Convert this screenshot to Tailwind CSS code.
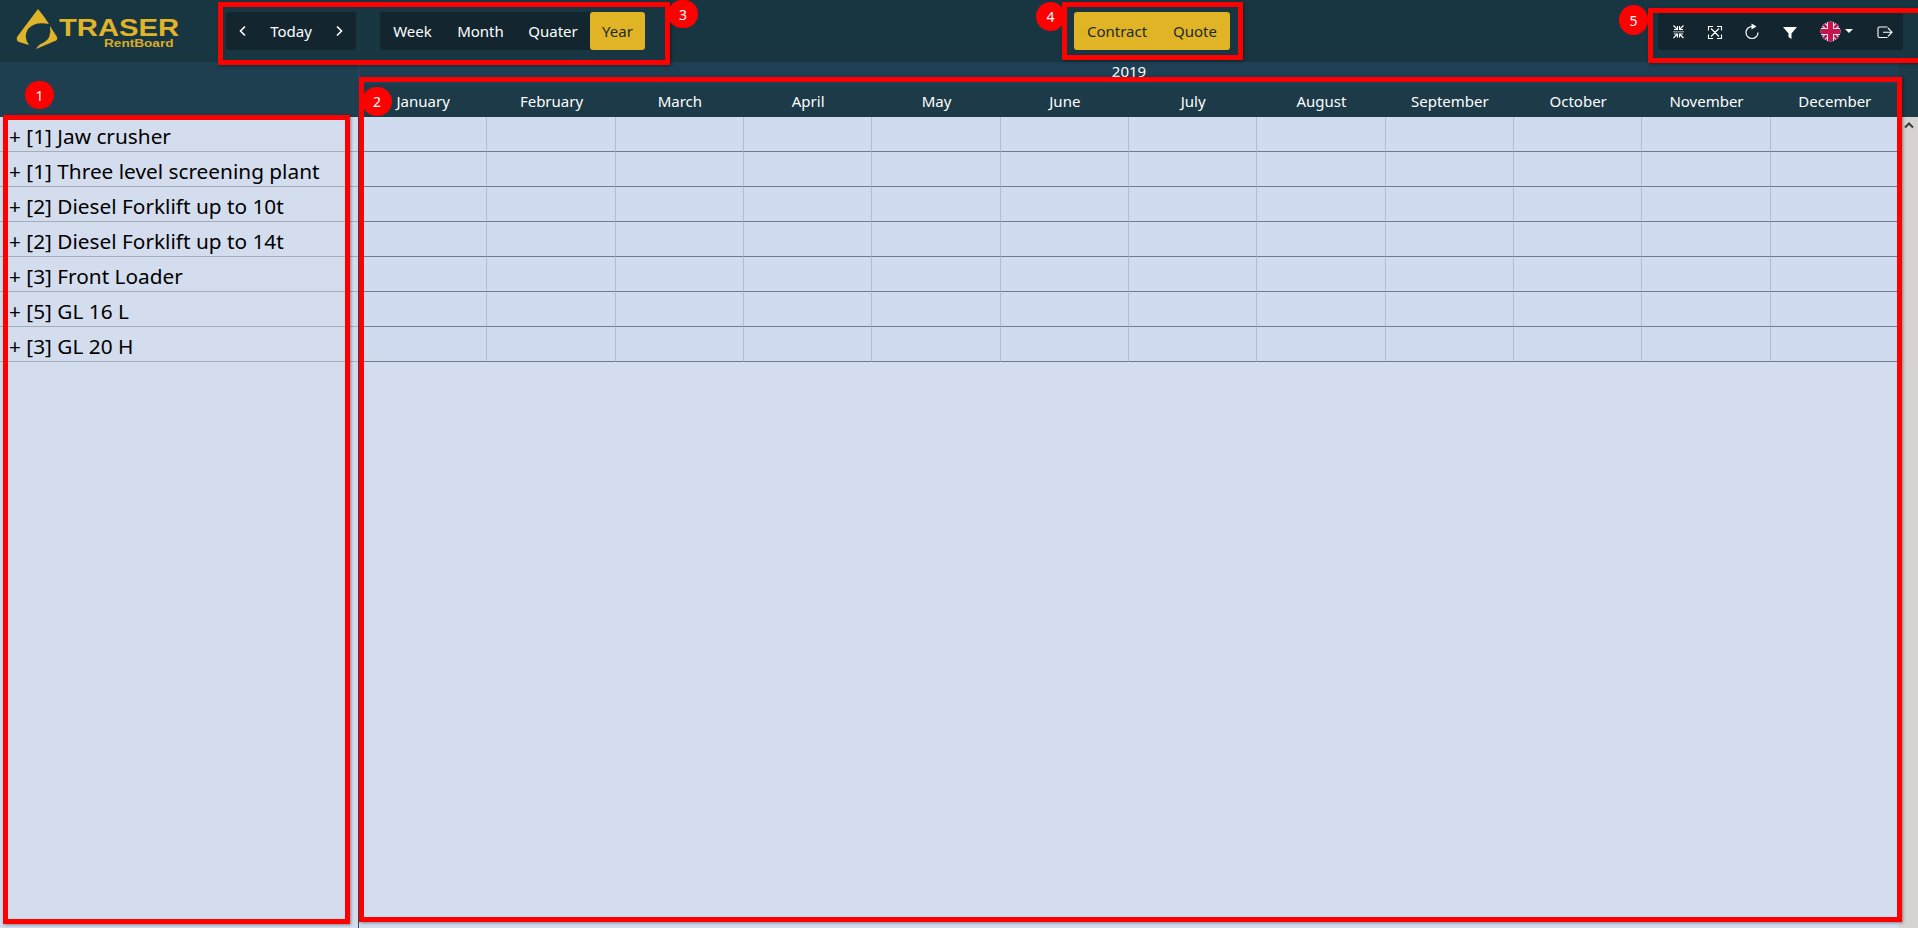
<!DOCTYPE html>
<html lang="en">
<head>
  <meta charset="UTF-8">
  <title>Traser RentBoard</title>
  <script src="https://cdn.jsdelivr.net/npm/@tailwindcss/browser@4"></script>
</head>
<body class="relative h-screen overflow-hidden bg-[#d4ddef] font-['Noto_Sans',sans-serif]">

  <!-- Top bar -->
  <header class="h-[62px] flex items-center bg-[#183642] text-white text-[15px]">
    <!-- Logo -->
    <div class="relative w-[226px] h-full pl-[16px] pt-[9px]">
      <svg class="w-[42px] h-[41px]" viewBox="0 0 42 41" fill="#e0b428">
        <path d="M22 0 L1 28 Q0 32 3 33 L13 36 Q7 28 12 20 Q19 12 33 15 Q28 7 22 0Z"/>
        <path d="M34 17 L41 28 Q42 31 39 32 L20 40 Q23 35 27 34 Q36 30 34 17Z"/>
      </svg>
      <span class="absolute left-[59px] top-[16px] origin-left scale-x-[1.27] text-[23px] leading-[24px] font-bold text-[#e0b428] font-['Liberation_Sans',sans-serif]">TRASER</span>
      <span class="absolute left-[104px] top-[38px] origin-left scale-x-[1.36] text-[10px] leading-[11px] font-bold text-[#d9ad26] font-['Liberation_Sans',sans-serif]">RentBoard</span>
    </div>

    <!-- Navigation -->
    <div class="flex items-center h-[38px] w-[130px] bg-[#13262f] rounded-[3px]">
      <button class="w-[34px] h-full flex items-center justify-center">
        <svg class="w-[10px] h-[12px]" viewBox="0 0 10 12" fill="none" stroke="white" stroke-width="1.6"><path d="M7 1.5 L2.5 6 L7 10.5"/></svg>
      </button>
      <button class="flex-1 h-full">Today</button>
      <button class="w-[34px] h-full flex items-center justify-center">
        <svg class="w-[10px] h-[12px]" viewBox="0 0 10 12" fill="none" stroke="white" stroke-width="1.6"><path d="M3 1.5 L7.5 6 L3 10.5"/></svg>
      </button>
    </div>
    <div class="ml-[24px] flex items-center h-[38px] w-[265px] bg-[#13262f] rounded-[3px]">
      <button class="w-[65px] h-full">Week</button>
      <button class="w-[71px] h-full">Month</button>
      <button class="w-[74px] h-full">Quater</button>
      <button class="w-[55px] h-full bg-[#e0b424] text-[#1b2a2c] rounded-[3px]">Year</button>
    </div>

    <!-- Document type -->
    <div class="ml-[429px] flex items-center h-[38px] w-[156px] bg-[#e0b424] text-[#1b2a2c] rounded-[3px]">
      <button class="w-[86px] h-full">Contract</button>
      <button class="w-[70px] h-full">Quote</button>
    </div>

    <!-- Tools -->
    <div class="ml-auto mr-[15px] h-[38px] w-[245px] bg-[#13262f] rounded-[3px]">
      <svg class="w-[245px] h-[38px]" viewBox="0 0 245 38" fill="none" stroke="white" stroke-width="1.1">
        <!-- collapse -->
        <path d="M15.5 13.5 L19.5 17.5 M19.5 14 V17.5 H16 M25.5 13.5 L21.5 17.5 M21.5 14 V17.5 H25 M15.5 26 L19.5 22 M19.5 25.5 V22 H16 M25.5 26 L21.5 22 M21.5 25.5 V22 H25"/>
        <path d="M15 19.8 H26" stroke-opacity="0.6"/>
        <!-- expand -->
        <path d="M53 16.5 L61 24.5 M61 16.5 L53 24.5 M50.5 18.5 V14.5 H55 M59 14.5 H63.5 V18.5 M50.5 22.5 V26.5 H55 M59 26.5 H63.5 V22.5"/>
        <!-- refresh -->
        <path d="M94 14.5 A6 6 0 1 0 100 20.5" stroke-width="1.2"/>
        <path d="M93.5 11.5 L98.5 14.5 L93.5 17.5Z" fill="white" stroke="none"/>
        <!-- filter -->
        <path d="M125 15 H139 L133.5 21.5 V27 L130.5 25 V21.5Z" fill="white" stroke="none"/>
        <!-- flag -->
        <clipPath id="flag"><circle cx="172.5" cy="19.5" r="10"/></clipPath>
        <g clip-path="url(#flag)" stroke="none">
          <rect x="162" y="9" width="21" height="21" fill="#4a4590"/>
          <path d="M162 9 L183 30 M183 9 L162 30" stroke="#e6dcee" stroke-width="4.5"/>
          <path d="M162 9 L183 30 M183 9 L162 30" stroke="#c4164a" stroke-width="2.5"/>
          <path d="M169 9 H176 V16 H183 V23 H176 V30 H169 V23 H162 V16 H169Z" fill="#efe8f2"/>
          <path d="M170 9 H175 V17 H183 V22 H175 V30 H170 V22 H162 V17 H170Z" fill="#c4164a"/>
        </g>
        <path d="M187 17 H195 L191 21Z" fill="white" stroke="none"/>
        <!-- sign out -->
        <path d="M229.5 15 H221.5 Q220 15 220 16.5 V24 Q220 25.5 221.5 25.5 H229.5"/>
        <path d="M225 20.2 H234 M230 16 L234 20.2 L230 24.4"/>
      </svg>
    </div>
  </header>

  <!-- Board -->
  <div class="flex h-[866px]">
    <!-- Resources -->
    <aside class="w-[358px] shrink-0 flex flex-col">
      <div class="h-[55px] bg-[#1d3f50]"></div>
      <div id="resources" class="flex-1 bg-[#d3ddee]"></div>
    </aside>

    <!-- Timeline -->
    <main class="w-[1541px] shrink-0 flex flex-col border-l border-[#33455c]">
      <div class="h-[22px] bg-[#1f3f54] text-white text-[15px] leading-[19px] text-center">2019</div>
      <div id="months" class="h-[33px] grid grid-cols-12 bg-[#1c3a48] text-white text-[15px]"></div>
      <div id="cells" class="grid grid-cols-12 auto-rows-[35px] bg-[#d0dbef]"></div>
    </main>

    <!-- Scrollbar -->
    <div class="flex-1 flex flex-col">
      <div class="h-[55px] bg-[#1c3a48]"></div>
      <div class="flex-1 bg-[#d6d3d0] flex justify-center pt-[4px]">
        <svg class="w-[12px] h-[8px]" viewBox="0 0 12 8" fill="none" stroke="#3a3a3a" stroke-width="2"><path d="M2 6.5 L6 2.5 L10 6.5"/></svg>
      </div>
    </div>
  </div>

  <!-- Annotations -->
  <div class="absolute left-[3px] top-[115px] w-[347px] h-[809px] border-[5px] border-[#ff0000] shadow-[1px_1px_3px_rgba(0,0,0,0.4)]"></div>
  <div class="absolute left-[359px] top-[77px] w-[1543px] h-[845px] border-[5px] border-[#ff0000] shadow-[1px_1px_3px_rgba(0,0,0,0.4)]"></div>
  <div class="absolute left-[218px] top-[2px] w-[452px] h-[63px] border-[5px] border-[#ff0000] shadow-[1px_1px_3px_rgba(0,0,0,0.4)]"></div>
  <div class="absolute left-[1062px] top-[2px] w-[181px] h-[58px] border-[5px] border-[#ff0000] shadow-[1px_1px_3px_rgba(0,0,0,0.4)]"></div>
  <div class="absolute left-[1648px] top-[8px] w-[275px] h-[55px] border-[5px] border-[#ff0000] shadow-[1px_1px_3px_rgba(0,0,0,0.4)]"></div>

  <div class="absolute left-[25px] top-[81px] w-[29px] h-[28px] rounded-full bg-[#ff0000] text-white text-[14px] flex items-center justify-center">1</div>
  <div class="absolute left-[362px] top-[87px] w-[30px] h-[29px] rounded-full bg-[#ff0000] text-white text-[14px] flex items-center justify-center">2</div>
  <div class="absolute left-[668px] top-[0px] w-[30px] h-[28px] rounded-full bg-[#ff0000] text-white text-[14px] flex items-center justify-center">3</div>
  <div class="absolute left-[1036px] top-[2px] w-[29px] h-[29px] rounded-full bg-[#ff0000] text-white text-[14px] flex items-center justify-center">4</div>
  <div class="absolute left-[1619px] top-[5px] w-[29px] h-[30px] rounded-full bg-[#ff0000] text-white text-[14px] flex items-center justify-center">5</div>

  <script>
    const items = ['[1] Jaw crusher', '[1] Three level screening plant', '[2] Diesel Forklift up to 10t', '[2] Diesel Forklift up to 14t', '[3] Front Loader', '[5] GL 16 L', '[3] GL 20 H'];
    const months = ['January', 'February', 'March', 'April', 'May', 'June', 'July', 'August', 'September', 'October', 'November', 'December'];

    document.getElementById('resources').innerHTML = items.map(name =>
      `<div class="h-[35px] pl-[9px] pt-[6px] flex items-center border-b border-[#a3adb8] text-black text-[20.8px] whitespace-nowrap">+ ${name}</div>`
    ).join('');

    document.getElementById('months').innerHTML = months.map(m =>
      `<div class="flex items-center justify-center pt-[2px]">${m}</div>`
    ).join('');

    document.getElementById('cells').innerHTML = items.map(() => months.map(() =>
      `<div class="border-b border-r border-b-[#6f7c8c] border-r-[#b3bccb]"></div>`
    ).join('')).join('');
  </script>
</body>
</html>
